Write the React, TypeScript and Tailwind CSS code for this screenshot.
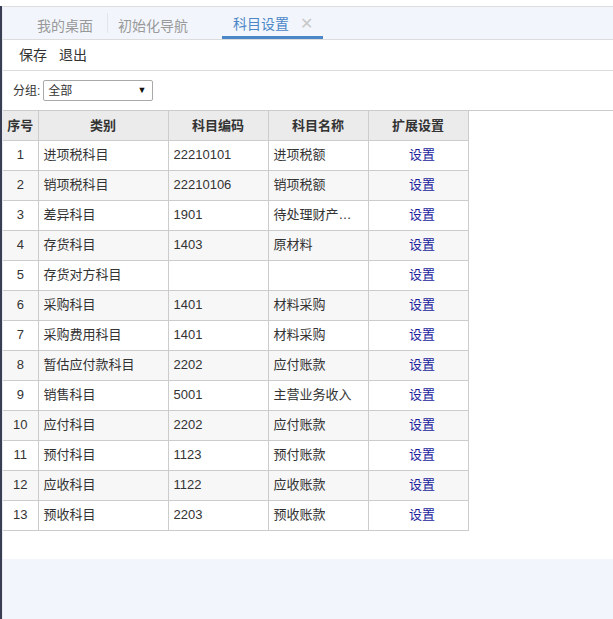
import React from 'react';

const rows = [
  ['1', '进项税科目', '22210101', '进项税额'],
  ['2', '销项税科目', '22210106', '销项税额'],
  ['3', '差异科目', '1901', '待处理财产…'],
  ['4', '存货科目', '1403', '原材料'],
  ['5', '存货对方科目', '', ''],
  ['6', '采购科目', '1401', '材料采购'],
  ['7', '采购费用科目', '1401', '材料采购'],
  ['8', '暂估应付款科目', '2202', '应付账款'],
  ['9', '销售科目', '5001', '主营业务收入'],
  ['10', '应付科目', '2202', '应付账款'],
  ['11', '预付科目', '1123', '预付账款'],
  ['12', '应收科目', '1122', '应收账款'],
  ['13', '预收科目', '2203', '预收账款'],
];

const font = { fontFamily: '"Liberation Sans", "Noto Sans CJK SC", sans-serif' };

export default function App() {
  return (
    <div className="w-[613px] h-[619px] bg-white text-[#333] flex flex-col overflow-hidden" style={font}>
      <div className="h-[6px] bg-white" />
      <div className="flex-1 flex">
        <div className="w-[2px] bg-[#3a3e52]" />
        <div className="w-[1px] bg-[#e6e9ef]" />
        <div className="flex-1 flex flex-col">
          {/* 标签栏 */}
          <div className="h-[34px] bg-[#f2f6fc] border-t border-b border-[#dcdcdc] flex items-stretch text-[14px]">
            <div className="w-[34px]" />
            <div className="flex items-center text-[#999] pr-[14px] pt-[6px]">我的桌面</div>
            <div className="w-px bg-[#e2e5ea] my-[6px]" />
            <div className="flex items-center text-[#999] pl-[10px] pr-[34px] pt-[6px]">初始化导航</div>
            <div className="flex items-center gap-[11px] pl-[11px] pr-[10px] text-[#4a86c8] border-b-[3px] border-[#4a86c8] pt-[5px]">
              <span>科目设置</span>
              <span className="text-[#c8c8c8] text-[16px] leading-none">✕</span>
            </div>
          </div>
          {/* 工具栏 */}
          <div className="h-[31px] border-b border-[#dcdcdc] flex items-center gap-[12px] pl-[16px] text-[14px] text-[#333]">
            <span>保存</span>
            <span>退出</span>
          </div>
          {/* 分组 */}
          <div className="h-[39px] flex items-center pl-[10px] text-[12px]">
            <span>分组:</span>
            <div className="ml-[3px] w-[110px] h-[21px] border border-[#a9a9a9] rounded-[2px] flex items-center justify-between pl-[4px] pr-[6px]">
              <span>全部</span>
              <span className="text-[9px] text-[#111]">▼</span>
            </div>
          </div>
          {/* 表格 */}
          <div className="border-t border-[#ccc] h-[449px] bg-white">
            <table className="border-collapse text-[13px] table-fixed">
              <colgroup>
                <col className="w-[35px]" />
                <col className="w-[130px]" />
                <col className="w-[100px]" />
                <col className="w-[100px]" />
                <col className="w-[100px]" />
              </colgroup>
              <thead>
                <tr className="h-[29px] bg-[#ebebeb] font-bold">
                  <th className="border border-t-0 border-l-0 border-[#ccc] text-center">序号</th>
                  <th className="border border-t-0 border-[#ccc] text-center">类别</th>
                  <th className="border border-t-0 border-[#ccc] text-center">科目编码</th>
                  <th className="border border-t-0 border-[#ccc] text-center">科目名称</th>
                  <th className="border border-t-0 border-[#ccc] text-center">扩展设置</th>
                </tr>
              </thead>
              <tbody>
                {rows.map((r, i) => (
                  <tr key={r[0]} className={i % 2 === 1 ? 'h-[30px] bg-[#f7f7f7]' : 'h-[30px] bg-white'}>
                    <td className="border border-l-0 border-[#ccc] text-center">{r[0]}</td>
                    <td className="border border-[#ccc] px-[5px] whitespace-nowrap">{r[1]}</td>
                    <td className="border border-[#ccc] px-[5px]">{r[2]}</td>
                    <td className="border border-[#ccc] px-[5px] whitespace-nowrap">{r[3]}</td>
                    <td className="border border-[#ccc] text-center pl-[8px] text-[#1c1c9c]">设置</td>
                  </tr>
                ))}
              </tbody>
            </table>
          </div>
          <div className="flex-1 bg-[#f2f6fc]" />
        </div>
      </div>
    </div>
  );
}
